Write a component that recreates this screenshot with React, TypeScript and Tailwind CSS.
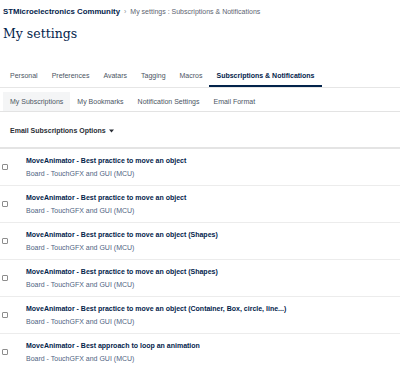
import React from 'react';

const mainTabs = ['Personal', 'Preferences', 'Avatars', 'Tagging', 'Macros'];
const subTabs = ['My Bookmarks', 'Notification Settings', 'Email Format'];

const subscriptions = [
  'MoveAnimator - Best practice to move an object',
  'MoveAnimator - Best practice to move an object',
  'MoveAnimator - Best practice to move an object (Shapes)',
  'MoveAnimator - Best practice to move an object (Shapes)',
  'MoveAnimator - Best practice to move an object (Container, Box, circle, line...)',
  'MoveAnimator - Best approach to loop an animation',
];

const App: React.FC = () => {
  return (
    <div className="w-[400px] h-[366px] overflow-hidden bg-white font-['Liberation_Sans',Arial,sans-serif]">
      {/* Breadcrumb */}
      <div className="flex items-center h-[10px] mt-[7px] px-[3px] leading-[10px]">
        <span className="text-[7.8px] font-bold text-[#03234b]">STMicroelectronics Community</span>
        <span className="mx-[4px] text-[#8a8f98] text-[7px]">›</span>
        <span className="text-[7px] text-[#5c6470]">My settings : Subscriptions &amp; Notifications</span>
      </div>

      <h1 className="mt-[8px] px-[3px] text-[12.5px] leading-[18px] text-[#03234b] font-['DejaVu_Serif',serif]">
        My settings
      </h1>

      {/* Main tabs */}
      <div className="mt-[21px] flex border-b border-[#e6e6e6] px-[3px] text-[7px] leading-[9px]">
        {mainTabs.map((t) => (
          <div key={t} className="px-[7px] pt-[7px] pb-[7px] text-[#4b5563]">
            {t}
          </div>
        ))}
        <div className="px-[7px] pt-[7px] pb-[5px] font-bold text-[#03234b] border-b-2 border-[#03234b]">
          Subscriptions &amp; Notifications
        </div>
      </div>

      {/* Sub tabs */}
      <div className="mt-[4px] flex border-b border-[#e3e3e3] px-[3px] text-[7px] leading-[9px]">
        <div className="px-[7px] py-[5px] bg-[#f4f5f6] text-[#4b5563]">My Subscriptions</div>
        {subTabs.map((t) => (
          <div key={t} className="px-[7px] py-[5px] text-[#4b5563]">
            {t}
          </div>
        ))}
      </div>

      {/* Options */}
      <div className="flex items-center px-[10px] pt-[14px] pb-[12px] border-b-2 border-[#e4e4e4] text-[7px] leading-[9px] font-bold text-[#2b2f36]">
        Email Subscriptions Options
        <svg className="ml-[3px] w-[5px] h-[4px]" viewBox="0 0 10 6">
          <path d="M0 0h10L5 6z" fill="#2b2f36" />
        </svg>
      </div>

      {/* Subscription list */}
      <div>
        {subscriptions.map((title, i) => (
          <div key={i} className="flex items-center h-[37px] border-b border-[#ececec]">
            <div className="w-[26px] flex items-center pl-[2px]">
              <div className="w-[6px] h-[6px] border border-[#8d8d8d] rounded-[1px] bg-white" />
            </div>
            <div className="flex flex-col gap-[3px]">
              <span className="text-[7px] leading-[10px] font-bold text-[#03234b]">{title}</span>
              <span className="text-[7px] leading-[10px] text-[#4f6382]">Board - TouchGFX and GUI (MCU)</span>
            </div>
          </div>
        ))}
      </div>
    </div>
  );
};

export default App;
